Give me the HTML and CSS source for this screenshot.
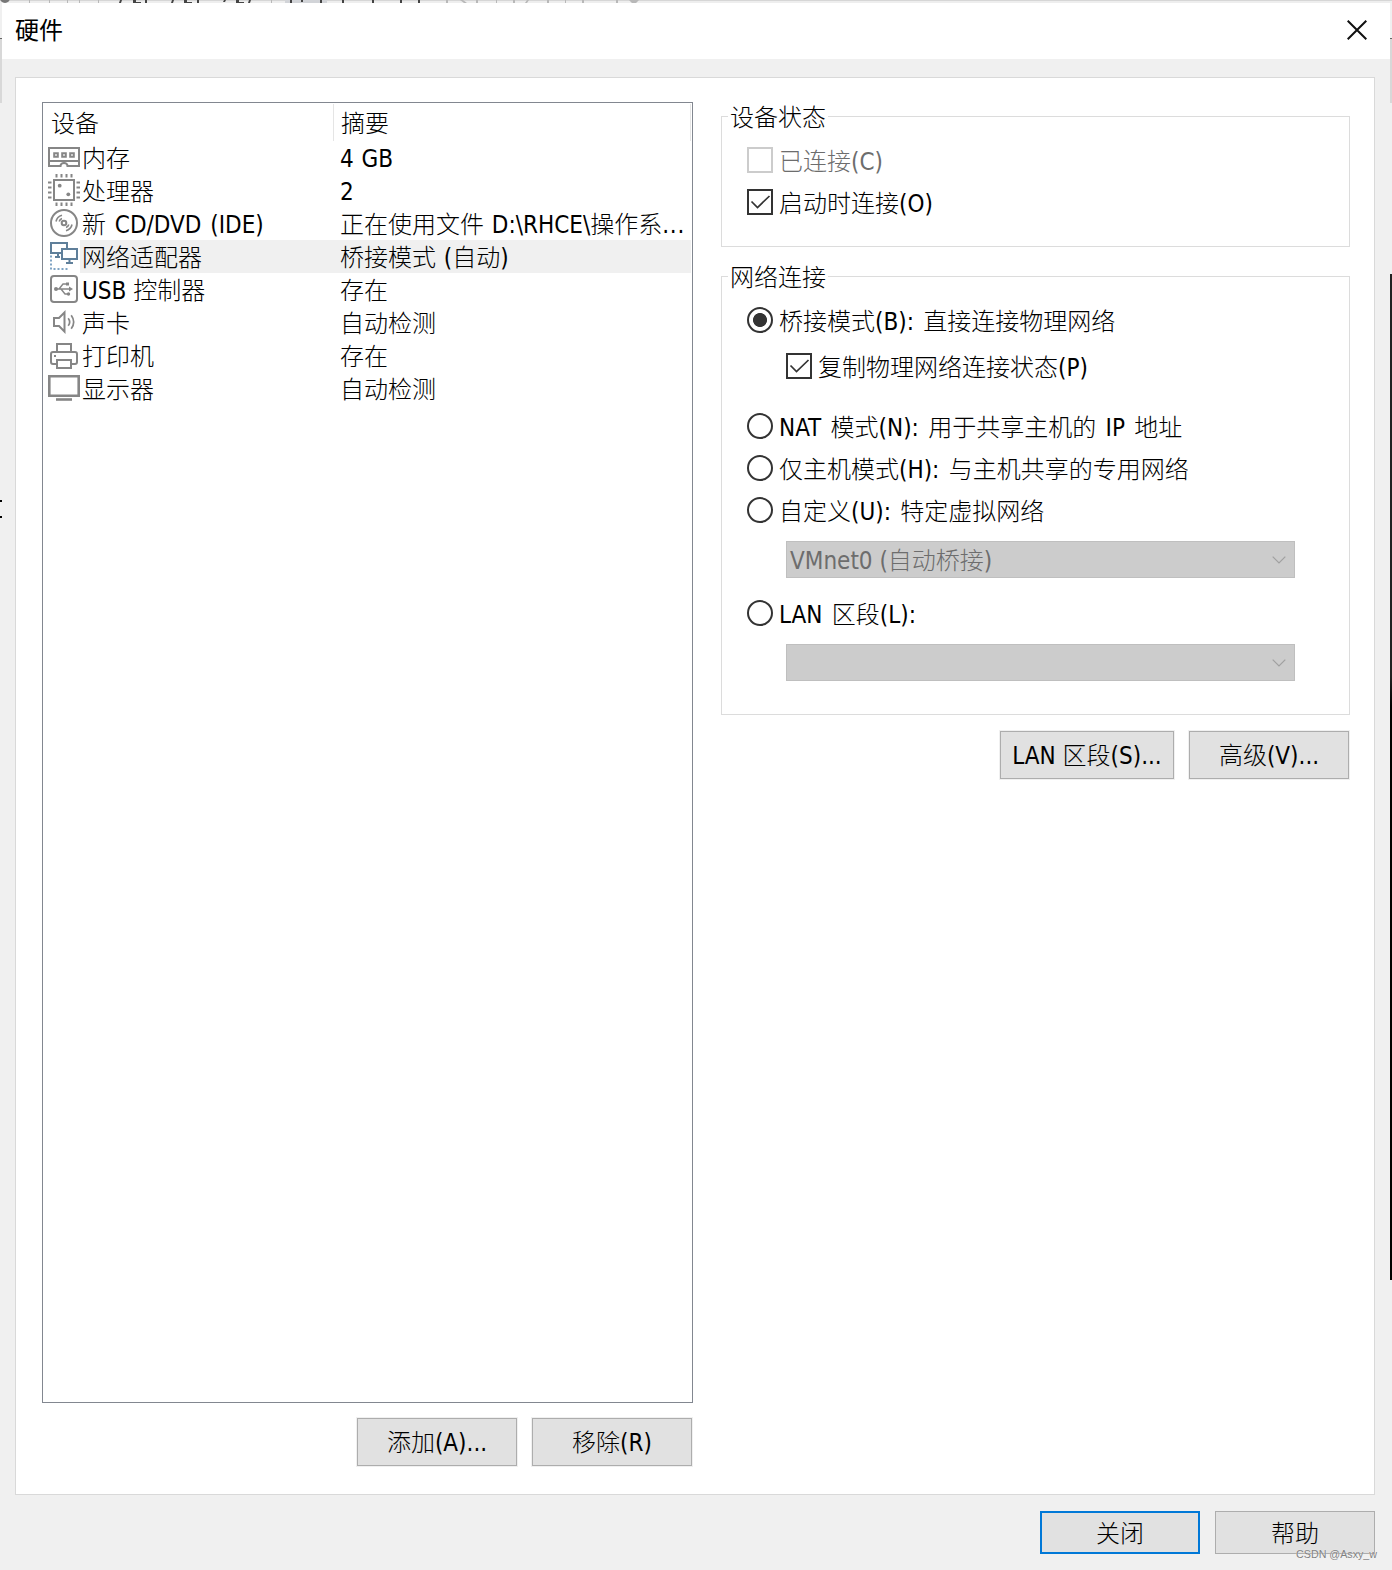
FILE: index.html
```html
<!DOCTYPE html>
<html lang="zh-CN">
<head>
    <meta charset="UTF-8">
    <meta name="viewport" content="width=device-width, initial-scale=1.0">
    <title>硬件</title>
    <link rel="stylesheet" href="styles.css">
</head>
<body>
    <svg class="behind" viewBox="0 0 1392 3">
        <circle cx="5" cy="-2" r="5" fill="#777"/>
        <path d="M29 0h1v3h-1zM49 0h1v3h-1zM67 0h1v3h-1zM79 0h1v3h-1zM98 0h1v3h-1zM271 0h1v3h-1zM446 0h2v3h-2zM460 0h3l4 3h-3zM476 0h2v3h-2zM496 0h1v3h-1zM513 0h2v3h-2zM527 0h2l-2 3h-2zM547 0h2v3h-2zM565 0h1v3h-1zM582 0h2v3h-2zM616 0h2v3h-2zM629 0h10l-3 3h-4z" fill="#b8b8b8"/>
        <path d="M285 0h42v3h-42z" fill="#d2d4d8"/>
        <path d="M120 0h2l-1 3h-2zM133 0h3v2h5v1h-8zM145 0h2v3h-2zM172 0h2l-1 3h-2zM184 0h3v2h5v1h-8zM197 0h2v3h-2zM224 0h2l-1 2h-2zM236 0h3v2h5v1h-8zM249 0h2l-1 3h-2zM290 0h2v3h-2zM301 0h2v2h-2zM320 0h2v3h-2zM342 0h2v3h-2zM372 0h2v3h-2zM400 0h2v3h-2zM418 0h2v3h-2z" fill="#444"/>
    </svg>
    <div class="dialog">
        <div class="titlebar">
            <h1>硬件</h1>
            <svg class="close" width="20" height="20" viewBox="0 0 20 20"><path d="M.7.7L19.3 19.3M19.3.7L.7 19.3"/></svg>
        </div>
        <div class="panel">
            <div class="left">
                <div class="device-list">
                    <div class="list-header">
                        <div class="col-device">设备</div>
                        <div class="col-summary">摘要</div>
                    </div>
                    <div class="row">
                        <svg class="icon" viewBox="0 0 32 33"><path d="M1 7h30v18H19.500a3.500 3 0 0 0-7 0H1z M1 20h30"/><path d="M6.200 12.200h3.600v3.600H6.200zM14.200 12.200h3.600v3.600h-3.600zM22.200 12.200h3.600v3.600h-3.600z"/></svg>
                        <div class="device">内存</div>
                        <div class="summary">4 GB</div>
                    </div>
                    <div class="row">
                        <svg class="icon" viewBox="0 0 32 33"><path d="M6 6h20v20H6z"/><path d="M8.500 0v3.500M13.500 0v3.500M18.500 0v3.500M23.500 0v3.500M8.500 28.500v3.500M13.500 28.500v3.500M18.500 28.500v3.500M23.500 28.500v3.500M0 8.500h3.500M0 13.500h3.500M0 18.500h3.500M0 23.500h3.500M28.500 8.500h3.500M28.500 13.500h3.500M28.500 18.500h3.500M28.500 23.500h3.500"/><circle class="fill" cx="11.700" cy="11.700" r="1.900"/><circle class="fill" cx="20.300" cy="20.300" r="1.900"/></svg>
                        <div class="device">处理器</div>
                        <div class="summary">2</div>
                    </div>
                    <div class="row">
                        <svg class="icon" viewBox="0 0 32 33"><circle cx="16" cy="16" r="13"/><circle cx="16" cy="16" r="2.300"/><path d="M8 14.500c.6-3 2.800-5.300 6-6.200M11.200 14.500c.4-1.400 1.400-2.500 2.800-3M24 17.500c-.6 3-2.800 5.300-6 6.200M20.800 17.500c-.4 1.400-1.400 2.500-2.800 3" stroke-width="1.600"/></svg>
                        <div class="device">新 CD/DVD (IDE)</div>
                        <div class="summary">正在使用文件 D:\RHCE\操作系<span class="dots-end">...</span></div>
                    </div>
                    <div class="row selected">
                        <svg class="icon network" viewBox="0 0 32 33"><path d="M14 13H3V3h16v5"/><path d="M14 9h15v10H14zM21.500 19v4M18 23h7M10 13v4M7 17h5"/><path class="dots" d="M3 15.500V30M5.500 29H21"/></svg>
                        <div class="device">网络适配器</div>
                        <div class="summary">桥接模式 (自动)</div>
                    </div>
                    <div class="row">
                        <svg class="icon" viewBox="0 0 32 33"><rect x="3" y="3" width="26" height="26" rx="3"/><path d="M8 16h14M11 16l4-5h4M13 16l4 5h3" stroke-width="1.400"/><circle class="fill" cx="8" cy="16" r="2"/><path class="fill" d="M21 13.500l4 2.500-4 2.500zM18 9.500h3v3h-3z"/><circle class="fill" cx="20.500" cy="21" r="1.700"/></svg>
                        <div class="device usb">USB 控制器</div>
                        <div class="summary">存在</div>
                    </div>
                    <div class="row">
                        <svg class="icon" viewBox="0 0 32 33"><path d="M6 12h5l5.500-5.500v19L11 20H6z"/><path d="M20.200 12.200q3 3.800 0 7.600M23.200 9.200q5 6.800 0 13.600" stroke-width="1.700"/></svg>
                        <div class="device">声卡</div>
                        <div class="summary">自动检测</div>
                    </div>
                    <div class="row">
                        <svg class="icon" viewBox="0 0 32 33"><path d="M9 13V5h14v8"/><path d="M9 25H5q-2 0-2-2v-8q0-2 2-2h22q2 0 2 2v8q0 2-2 2h-4"/><path d="M9 21h14v8H9z"/><path class="fill" d="M6 16h2v2H6z"/></svg>
                        <div class="device">打印机</div>
                        <div class="summary">存在</div>
                    </div>
                    <div class="row">
                        <svg class="icon" viewBox="0 0 32 33"><path d="M1.300 4.300h29.400v19.400H1.300z" stroke-width="2.600"/><path d="M8 27.500h16" stroke-width="2.600"/></svg>
                        <div class="device">显示器</div>
                        <div class="summary">自动检测</div>
                    </div>
                </div>
                <div class="buttons">
                    <button>添加(A)...</button>
                    <button>移除(R)</button>
                </div>
            </div>
            <div class="right">
                <div class="group status">
                    <div class="legend">设备状态</div>
                    <div class="option disabled"><span class="check"></span>已连接(C)</div>
                    <div class="option"><span class="check"><svg viewBox="0 0 26 26"><path d="M4.500 12.500l6 6L22.500 7"/></svg></span>启动时连接(O)</div>
                </div>
                <div class="group network-group">
                    <div class="legend">网络连接</div>
                    <div class="option"><span class="radio on"></span>桥接模式(B): 直接连接物理网络</div>
                    <div class="option nested"><span class="check"><svg viewBox="0 0 26 26"><path d="M4.500 12.500l6 6L22.500 7"/></svg></span>复制物理网络连接状态(P)</div>
                    <div class="option nat"><span class="radio"></span>NAT 模式(N): 用于共享主机的 IP 地址</div>
                    <div class="option"><span class="radio"></span>仅主机模式(H): 与主机共享的专用网络</div>
                    <div class="option"><span class="radio"></span>自定义(U): 特定虚拟网络</div>
                    <div class="select"><span>VMnet0 (自动桥接)</span><svg width="14" height="8" viewBox="0 0 14 8"><path d="M.7.700L7 7 13.300.7"/></svg></div>
                    <div class="option lan"><span class="radio"></span>LAN 区段(L):</div>
                    <div class="select"><span></span><svg width="14" height="8" viewBox="0 0 14 8"><path d="M.7.700L7 7 13.300.7"/></svg></div>
                </div>
                <div class="buttons">
                    <button class="wide">LAN 区段(S)...</button>
                    <button>高级(V)...</button>
                </div>
            </div>
        </div>
        <div class="footer">
            <button class="default">关闭</button>
            <button>帮助</button>
        </div>
        <div class="watermark">CSDN @Asxy_w</div>
    </div>
</body>
</html>
```
FILE: styles.css
```css
* {
    box-sizing: border-box;
}

body {
    margin: 0;
    padding: 3px 2px 0;
    height: 1570px;
    overflow: hidden;
    font-family: "DejaVu Sans Condensed", "Noto Sans CJK SC", sans-serif;
    font-size: 24px;
    line-height: 33px;
    color: #000;
    /* slivers of the windows behind the dialog */
    background:
        linear-gradient(#000, #000) 0 500px / 2px 2px no-repeat,
        linear-gradient(#000, #000) 0 516px / 2px 2px no-repeat,
        linear-gradient(#666, #666) 0 38px / 100% 1px no-repeat,
        linear-gradient(#d8d8d8, #d8d8d8) 0 39px / 100% 64px no-repeat,
        linear-gradient(#222 40%, #000 43%) 100% 274px / 2px 1006px no-repeat,
        linear-gradient(#d6d6d6 1px, #eee 1px) 0 0 / 100% 3px no-repeat,
        #f0f0f0;
}

.behind {
    position: absolute;
    top: 0;
    left: 0;
    width: 1392px;
    height: 3px;
}

.dialog {
    position: relative;
    height: 1567px;
    background: #f0f0f0;
}

.titlebar {
    display: flex;
    justify-content: space-between;
    align-items: center;
    height: 56px;
    padding: 0 23px 2px 13px;
    background: #fff;
}

.titlebar h1 {
    margin: 0;
    padding-top: 2px;
    font-size: 24px;
    font-weight: normal;
}

.close {
    fill: none;
    stroke: #111;
    stroke-width: 2;
}

.panel {
    display: flex;
    gap: 28px;
    width: 1360px;
    height: 1418px;
    margin: 18px 0 0 13px;
    padding: 24px 24px 0 26px;
    background: #fff;
    border: 1px solid #d9d9d9;
    font-weight: 300;
}

.left {
    width: 651px;
}

.device-list {
    height: 1301px;
    border: 1px solid #828790;
    padding-right: 1px;
}

.list-header {
    display: flex;
    height: 38px;
    padding-top: 1px;
    line-height: 40px;
}

.col-device {
    width: 291px;
    padding-left: 8px;
    border-right: 1px solid #e5e5e5;
    height: 37px;
}

.col-summary {
    flex: 1;
    padding-left: 7px;
    border-right: 1px solid #e5e5e5;
    height: 37px;
}

.row {
    display: flex;
    height: 33px;
    padding-left: 5px;
    line-height: 37px;
    white-space: nowrap;
}

.icon {
    width: 32px;
    height: 33px;
    fill: none;
    stroke: #868686;
    stroke-width: 2;
}

.icon .fill {
    fill: #868686;
    stroke: none;
}

.icon.network {
    stroke: #5f7f9a;
}

.icon .dots {
    stroke: #7fa3c4;
    stroke-dasharray: 2 2;
}

.device {
    width: 253px;
    padding-left: 2px;
    word-spacing: 2px;
}

.device.usb {
    word-spacing: 0;
}

.summary {
    flex: 1;
    padding-left: 7px;
    word-spacing: 1px;
}

.dots-end {
    letter-spacing: 0.7px;
}

.selected .device,
.selected .summary {
    background: #f0f0f0;
}

.buttons {
    display: flex;
    justify-content: flex-end;
    gap: 15px;
}

.left .buttons {
    margin-top: 15px;
    padding-right: 1px;
}

button {
    width: 160px;
    height: 48px;
    padding: 3px 0 0;
    border: 1px solid #adadad;
    background: #e1e1e1;
    box-shadow: 0 0 0 1px #f0f0f0;
    font: inherit;
    font-weight: 300;
    color: #000;
    white-space: nowrap;
}

button.wide {
    width: 174px;
}

.right {
    width: 629px;
    padding-top: 14px;
}

.group {
    border: 1px solid #dcdcdc;
    padding-left: 25px;
}

.status {
    height: 131px;
}

.network-group {
    height: 439px;
    margin-top: 29px;
}

.legend {
    width: 100px;
    height: 34px;
    margin: -17px 0 0 -19px;
    padding-left: 2px;
    line-height: 37px;
    background: #fff;
}

.option {
    display: flex;
    align-items: center;
    gap: 6px;
    height: 26px;
    margin-bottom: 16px;
    line-height: 30px;
    white-space: nowrap;
    word-spacing: 2.5px;
}

.option,
.select {
    align-items: flex-start;
}

.legend + .option {
    margin-top: 13px;
}

.disabled {
    color: #6d6d6d;
}

.check,
.radio {
    width: 26px;
    height: 26px;
    border: 2px solid #333;
    flex: none;
}

.check svg {
    display: block;
    width: 26px;
    height: 26px;
    margin: -2px;
    fill: none;
    stroke: #333;
    stroke-width: 1.7;
}

.disabled .check {
    border-color: #ccc;
}

.radio {
    border-radius: 50%;
}

.radio.on {
    background: radial-gradient(circle, #333 6.600px, #fff 7.400px);
}

.nested {
    margin: 20px 0 34px 39px;
}

.select {
    display: flex;
    justify-content: space-between;
    width: 509px;
    height: 37px;
    margin: 18px 0 0 39px;
    padding: 0 8px 0 3px;
    line-height: 38px;
    background: #ccc;
    border: 1px solid #bfbfbf;
    color: #6d6d6d;
}

.select svg {
    margin-top: 14px;
    fill: none;
    stroke: #a0a0a0;
    stroke-width: 1.2;
}

.lan {
    margin: 22px 0 0;
}

.right .buttons {
    margin-top: 16px;
    padding-right: 1px;
}

.footer {
    display: flex;
    justify-content: flex-end;
    gap: 15px;
    padding: 16px 15px 0 0;
}

.footer button {
    height: 43px;
    box-shadow: none;
}

.footer .default {
    border: 2px solid #0078d7;
}

.watermark {
    position: absolute;
    right: 13px;
    bottom: 8px;
    font: 10.7px/16px "Liberation Sans", Arial, sans-serif;
    color: #808080;
    text-shadow: 0 0 1px #fff;
}
```
